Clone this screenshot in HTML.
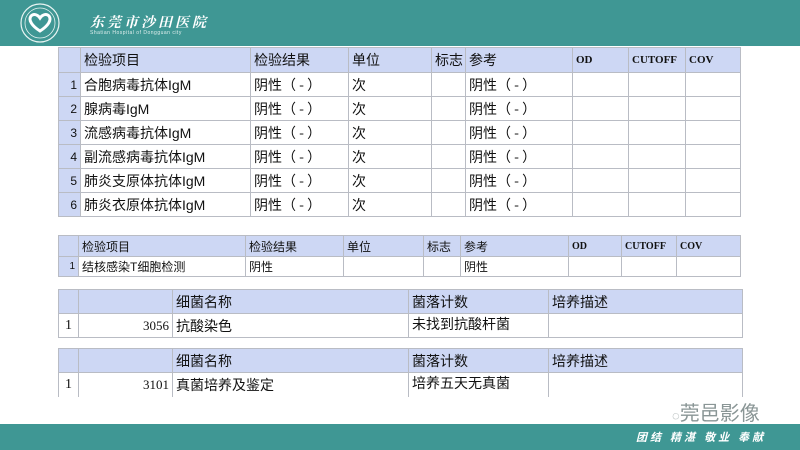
<!DOCTYPE html>
<html><head><meta charset="utf-8"><style>
*{margin:0;padding:0;box-sizing:border-box}
body{width:800px;height:450px;background:#fff;position:relative;overflow:hidden;font-family:"Liberation Sans","Noto Sans CJK SC",sans-serif;color:#111}
.hdr{position:absolute;left:0;top:0;width:800px;height:46px;background:#3f9794}
.ftr{position:absolute;left:0;top:424px;width:800px;height:26px;background:#3f9794}
table{position:absolute;border-collapse:collapse;table-layout:fixed;font-size:14px}
td{border:1px solid #b9bcc4;padding:0 3px;white-space:nowrap;overflow:hidden}
tr.h td{background:#cdd7f4}
td.n{background:#cdd7f4;text-align:right;font-size:12px}
.lat{font-family:"Liberation Serif",serif;font-size:11px;font-weight:bold}
.p{font-family:"Noto Sans CJK SC",sans-serif}
</style></head><body>
<div class="hdr"></div>
<svg style="position:absolute;left:18px;top:2px" width="44" height="42" viewBox="0 0 44 42">
<circle cx="22" cy="21" r="19" fill="none" stroke="#e8f4f2" stroke-width="1.2"/>
<circle cx="22" cy="21" r="15" fill="none" stroke="#e8f4f2" stroke-width="0.8"/>
<path d="M22 29 C14 24 10 18 13 14 C16 11 20 13 22 16 C24 13 28 11 31 14 C34 18 30 24 22 29Z" fill="none" stroke="#fff" stroke-width="3"/>
</svg>
<div style="position:absolute;left:90px;top:12px;color:#fff;font-size:14px;font-weight:bold;font-style:italic;letter-spacing:3px;font-family:'Noto Serif CJK SC',serif">东莞市沙田医院</div>
<div style="position:absolute;left:90px;top:30px;color:#dfeeed;font-size:5px;letter-spacing:.5px">Shatian Hospital of Dongguan city</div>

<table style="left:58px;top:47px;width:682px">
<colgroup><col style="width:22px"><col style="width:170px"><col style="width:98px"><col style="width:83px"><col style="width:34px"><col style="width:107px"><col style="width:56px"><col style="width:57px"><col style="width:55px"></colgroup>
<tr class="h" style="height:25px"><td></td><td>检验项目</td><td>检验结果</td><td>单位</td><td>标志</td><td>参考</td><td class="lat">OD</td><td class="lat">CUTOFF</td><td class="lat">COV</td></tr>
<tr style="height:24px"><td class="n">1</td><td>合胞病毒抗体IgM</td><td>阴性<span class="p">（ - ）</span></td><td>次</td><td></td><td>阴性<span class="p">（ - ）</span></td><td></td><td></td><td></td></tr>
<tr style="height:24px"><td class="n">2</td><td>腺病毒IgM</td><td>阴性<span class="p">（ - ）</span></td><td>次</td><td></td><td>阴性<span class="p">（ - ）</span></td><td></td><td></td><td></td></tr>
<tr style="height:24px"><td class="n">3</td><td>流感病毒抗体IgM</td><td>阴性<span class="p">（ - ）</span></td><td>次</td><td></td><td>阴性<span class="p">（ - ）</span></td><td></td><td></td><td></td></tr>
<tr style="height:24px"><td class="n">4</td><td>副流感病毒抗体IgM</td><td>阴性<span class="p">（ - ）</span></td><td>次</td><td></td><td>阴性<span class="p">（ - ）</span></td><td></td><td></td><td></td></tr>
<tr style="height:24px"><td class="n">5</td><td>肺炎支原体抗体IgM</td><td>阴性<span class="p">（ - ）</span></td><td>次</td><td></td><td>阴性<span class="p">（ - ）</span></td><td></td><td></td><td></td></tr>
<tr style="height:24px"><td class="n">6</td><td>肺炎衣原体抗体IgM</td><td>阴性<span class="p">（ - ）</span></td><td>次</td><td></td><td>阴性<span class="p">（ - ）</span></td><td></td><td></td><td></td></tr>
</table>

<table style="left:58px;top:235px;width:682px;font-size:12px">
<colgroup><col style="width:20px"><col style="width:167px"><col style="width:98px"><col style="width:80px"><col style="width:37px"><col style="width:108px"><col style="width:53px"><col style="width:55px"><col style="width:64px"></colgroup>
<tr class="h" style="height:21px"><td></td><td>检验项目</td><td>检验结果</td><td>单位</td><td>标志</td><td>参考</td><td class="lat" style="font-size:10px">OD</td><td class="lat" style="font-size:10px">CUTOFF</td><td class="lat" style="font-size:10px">COV</td></tr>
<tr style="height:20px"><td class="n" style="font-size:10px">1</td><td>结核感染T细胞检测</td><td>阴性</td><td></td><td></td><td>阴性</td><td></td><td></td><td></td></tr>
</table>

<table style="left:58px;top:289px;width:684px">
<colgroup><col style="width:20px"><col style="width:94px"><col style="width:236px"><col style="width:140px"><col style="width:194px"></colgroup>
<tr class="h" style="height:24px"><td></td><td></td><td>细菌名称</td><td>菌落计数</td><td>培养描述</td></tr>
<tr style="height:24px"><td style="text-align:center;font-family:'Liberation Serif',serif">1</td><td style="text-align:right;font-family:'Liberation Serif',serif;font-size:13px">3056</td><td>抗酸染色</td><td style="vertical-align:top">未找到抗酸杆菌</td><td></td></tr>
</table>

<table style="left:58px;top:348px;width:684px">
<colgroup><col style="width:20px"><col style="width:94px"><col style="width:236px"><col style="width:140px"><col style="width:194px"></colgroup>
<tr class="h" style="height:24px"><td></td><td></td><td>细菌名称</td><td>菌落计数</td><td>培养描述</td></tr>
<tr style="height:24px"><td style="text-align:center;font-family:'Liberation Serif',serif;border-bottom:none">1</td><td style="text-align:right;font-family:'Liberation Serif',serif;font-size:13px;border-bottom:none">3101</td><td style="border-bottom:none">真菌培养及鉴定</td><td style="vertical-align:top;border-bottom:none">培养五天无真菌</td><td style="border-bottom:none"></td></tr>
</table>

<div style="position:absolute;left:672px;top:397px;font-size:20px;color:#8a9696;white-space:nowrap">
<span style="font-size:13px">◌</span>莞邑影像</div>
<div class="ftr"></div>
<div style="position:absolute;left:636px;top:429px;color:#fff;font-size:11px;font-weight:bold;font-style:italic;letter-spacing:3px;white-space:nowrap">团结 精湛 敬业 奉献</div>
</body></html>
